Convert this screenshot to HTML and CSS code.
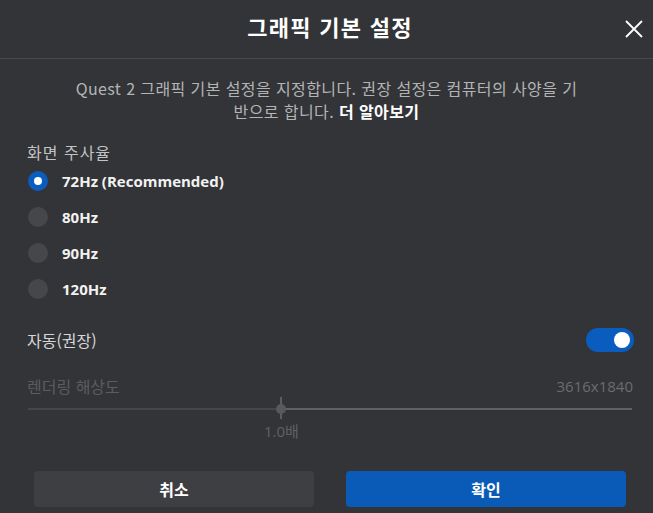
FILE: index.html
```html
<!DOCTYPE html>
<html lang="ko">
<head>
<meta charset="utf-8">
<link rel="stylesheet" href="styles.css">
</head>
<body>
<div class="dialog">
  <header class="header">
    <span></span>
    <h1 class="title">그래픽 기본 설정</h1>
    <button class="close" aria-label="닫기">
      <svg width="18" height="18" viewBox="0 0 18 18"><path d="M1 1L17 17M17 1L1 17" stroke="#fff" stroke-width="1.8" fill="none"/></svg>
    </button>
  </header>
  <p class="desc">Quest 2 그래픽 기본 설정을 지정합니다. 권장 설정은 컴퓨터의 사양을 기<br>반으로 합니다. <a class="more">더 알아보기</a></p>
  <div class="content">
    <div class="label">화면 주사율</div>
    <ul class="radios">
      <li class="radio-row"><span class="radio checked"></span><span class="radio-text">72Hz (Recommended)</span></li>
      <li class="radio-row"><span class="radio"></span><span class="radio-text">80Hz</span></li>
      <li class="radio-row"><span class="radio"></span><span class="radio-text">90Hz</span></li>
      <li class="radio-row"><span class="radio"></span><span class="radio-text">120Hz</span></li>
    </ul>
    <div class="auto-row">
      <span class="auto-label">자동(권장)</span>
      <span class="toggle"><span class="knob"></span></span>
    </div>
    <div class="res-row">
      <span class="res-label">렌더링 해상도</span>
      <span class="res-value">3616x1840</span>
    </div>
    <div class="slider">
      <div class="track"><div class="fill" style="width:41.9%"></div></div>
      <div class="thumb" style="left:41.9%"><span class="tick"></span><span class="dot"></span></div>
    </div>
    <div class="slider-value" style="margin-left:41.9%">1.0배</div>
  </div>
  <div class="buttons">
    <button class="btn cancel">취소</button>
    <button class="btn ok">확인</button>
  </div>
</div>
</body>
</html>
```
FILE: styles.css
```css
html, body {
  margin: 0;
  padding: 0;
  background: #333437;
}
body {
  font-family: "Open Sans", "Noto Sans CJK KR", sans-serif;
  color: #fff;
  width: 653px;
  height: 513px;
  overflow: hidden;
}
.header {
  border-bottom: 1px solid #47484b;
  display: grid;
  grid-template-columns: 1fr auto 1fr;
  align-items: center;
  padding: 0 10px 6px 17px;
  box-sizing: border-box;
  height: 59px;
}
.title {
  margin: 0;
  font-size: 22px;
  font-weight: 700;
  letter-spacing: 1.3px;
  line-height: 28px;
  font-family: "Noto Sans CJK KR", sans-serif;
}
.close {
  justify-self: end;
  background: none;
  border: 0;
  padding: 0;
  width: 18px;
  height: 18px;
  display: flex;
  margin-top: 5px;
}
.desc {
  margin: 18px 0 0;
  text-align: center;
  font-size: 16px;
  letter-spacing: 0.4px;
  line-height: 23px;
  color: #b3b4b6;
  font-family: "Noto Sans CJK KR", sans-serif;
}
.more {
  color: #fff;
  font-weight: 700;
}
.content {
  padding: 0 19px 0 27px;
}
.label {
  margin-top: 18px;
  font-size: 16px;
  letter-spacing: 1px;
  line-height: 22px;
  color: #c2c3c5;
  font-family: "Noto Sans CJK KR", sans-serif;
}
.radios {
  list-style: none;
  margin: 0;
  padding: 0;
}
.radio-row {
  height: 36px;
  display: flex;
  align-items: center;
  gap: 14px;
  padding-left: 1px;
}
.radio {
  width: 20px;
  height: 20px;
  border-radius: 50%;
  background: #46474a;
  display: flex;
  align-items: center;
  justify-content: center;
}
.radio.checked {
  background: #0a5dbf;
}
.radio.checked::after {
  content: "";
  width: 8px;
  height: 8px;
  border-radius: 50%;
  background: #fff;
}
.radio-text {
  font-size: 15px;
  font-weight: 700;
  color: #f2f2f2;
  line-height: 20px;
}
.auto-row {
  margin-top: 21px;
  height: 24px;
  display: flex;
  align-items: center;
  justify-content: space-between;
}
.auto-label {
  font-size: 16px;
  color: #d6d7d8;
  font-family: "Noto Sans CJK KR", sans-serif;
  line-height: 22px;
}
.toggle {
  width: 48px;
  height: 24px;
  border-radius: 12px;
  background: #0a5dbf;
  display: flex;
  align-items: center;
  justify-content: flex-end;
  padding: 0 4px;
  box-sizing: border-box;
}
.knob {
  width: 16px;
  height: 16px;
  border-radius: 50%;
  background: #fff;
}
.res-row {
  margin-top: 24px;
  display: flex;
  justify-content: space-between;
  align-items: center;
  height: 20px;
}
.res-label {
  font-size: 16px;
  color: #5b5c5f;
  font-family: "Noto Sans CJK KR", sans-serif;
}
.res-value {
  font-size: 15px;
  color: #6b6c6f;
  padding-right: 1px;
}
.slider {
  position: relative;
  height: 22px;
  margin: 1px 2px 0 1px;
  display: flex;
  align-items: center;
}
.track {
  flex: 1;
  height: 2px;
  margin-top: 2px;
  background: #5f6063;
}
.fill {
  height: 100%;
  background: #45464a;
}
.thumb {
  position: absolute;
  top: 0;
  width: 0;
  height: 22px;
}
.tick {
  position: absolute;
  left: -1px;
  top: 0;
  width: 2px;
  height: 22px;
  background: #5b5c5f;
}
.dot {
  position: absolute;
  left: -5px;
  top: 7px;
  width: 10px;
  height: 10px;
  border-radius: 50%;
  background: #58595c;
}
.slider-value {
  display: inline-block;
  transform: translateX(-50%);
  margin-top: 2px;
  font-size: 15px;
  line-height: 20px;
  color: #606164;
  font-family: "Open Sans", "Noto Sans CJK KR", sans-serif;
}
.buttons {
  margin-top: 29px;
  padding: 0 27px 0 34px;
  display: grid;
  grid-template-columns: 280px 280px;
  gap: 32px;
}
.btn {
  height: 36px;
  border: 0;
  border-radius: 4px;
  font-family: "Noto Sans CJK KR", sans-serif;
  font-size: 16px;
  font-weight: 700;
  color: #fff;
}
.cancel {
  background: #3e3f42;
}
.ok {
  background: #0a5bb8;
}
```
